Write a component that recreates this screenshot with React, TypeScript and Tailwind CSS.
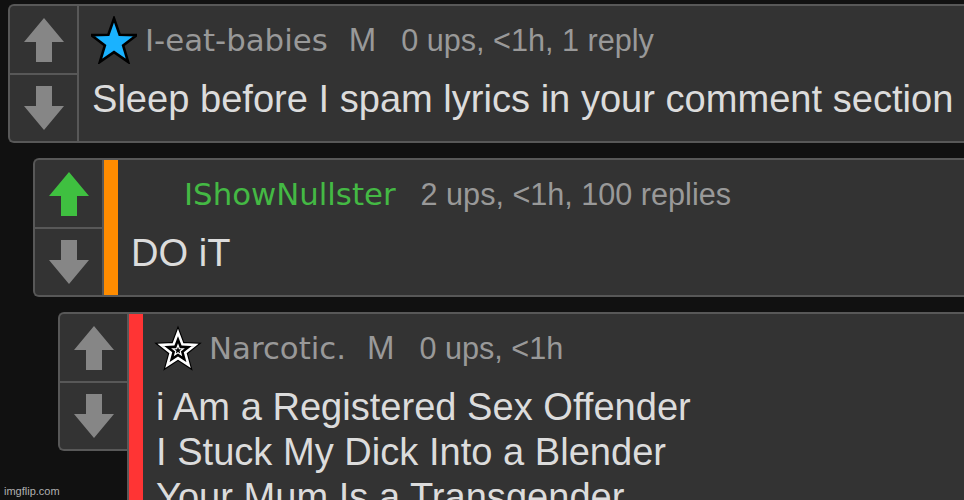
import React from 'react';

const GRAY = '#868686';

function starPoints(R: number, r: number, dy = 0) {
  const pts: string[] = [];
  for (let i = 0; i < 10; i++) {
    const rad = i % 2 === 0 ? R : r;
    const a = ((-90 + i * 36) * Math.PI) / 180;
    pts.push(`${(Math.cos(a) * rad).toFixed(2)},${(Math.sin(a) * rad + dy).toFixed(2)}`);
  }
  return pts.join(' ');
}

function Arrow({ dir, color }: { dir: 'up' | 'down'; color: string }) {
  return (
    <svg width="40" height="44" viewBox="0 0 40 44" className={dir === 'down' ? 'rotate-180' : ''}>
      <polygon points="20,0 40,24 28,24 28,44 12,44 12,24 0,24" fill={color} />
    </svg>
  );
}

function BlueStar() {
  return (
    <svg width="46" height="48" viewBox="-23 -24 46 48" className="shrink-0">
      <polygon points={starPoints(24, 9.6, 2.5)} fill="#1ab2ff" stroke="#000" strokeWidth="2.6" strokeLinejoin="miter" />
    </svg>
  );
}

function OutlineStar() {
  return (
    <svg width="48" height="48" viewBox="-24 -24 48 48" className="shrink-0">
      <polygon points={starPoints(25, 10.5, 2.5)} fill="#000" />
      <polygon points={starPoints(18, 7.6, 2.5)} fill="#000" stroke="#fff" strokeWidth="2.6" />
      <polygon points={starPoints(5.5, 2.3, 2.5)} fill="none" stroke="#fff" strokeWidth="1.2" />
    </svg>
  );
}

type CommentProps = {
  indent: string;
  bar?: string;
  upColor?: string;
  star?: 'blue' | 'outline' | 'none';
  name: string;
  nameColor?: string;
  mod?: boolean;
  stats: string;
  lines: string[];
};

function Comment({ indent, bar, upColor = GRAY, star = 'none', name, nameColor = 'text-[#999999]', mod, stats, lines }: CommentProps) {
  return (
    <div className={`flex items-start w-[1100px] ${indent}`}>
      <div className="w-[69px] h-[139px] shrink-0 flex flex-col border-2 border-r-0 border-[#585858] rounded-l-md bg-[#333333]">
        <div className="h-[67px] flex items-center justify-center">
          <Arrow dir="up" color={upColor} />
        </div>
        <div className="flex-1 flex items-center justify-center border-t-2 border-[#585858]">
          <Arrow dir="down" color={GRAY} />
        </div>
      </div>
      <div className="flex-1 min-h-[139px] flex border-2 border-[#585858] rounded-r-md bg-[#333333]">
        {bar && <div className={`w-[14px] shrink-0 ${bar}`} />}
        <div className="pl-[13px] pt-[14px] pb-[19px]">
          <div className="flex items-center h-[40px] whitespace-nowrap">
            <div className="w-[44px] h-[40px] flex items-center justify-center">
              {star === 'blue' && <BlueStar />}
              {star === 'outline' && <OutlineStar />}
            </div>
            <span className={`ml-[9px] font-['DejaVu_Sans',sans-serif] text-[30.8px] leading-[40px] ${nameColor}`}>{name}</span>
            {mod && <span className="ml-[21px] font-['Liberation_Sans',Arial,sans-serif] text-[33px] leading-[40px] text-[#999999]">M</span>}
            <span className="ml-[25px] font-['Liberation_Sans',Arial,sans-serif] text-[30.6px] leading-[40px] text-[#999999]">{stats}</span>
          </div>
          <div className="mt-[17px] font-['Liberation_Sans',Arial,sans-serif] text-[38.1px] leading-[45px] text-[#dcdcdc] whitespace-nowrap">
            {lines.map((l, i) => (
              <div key={i}>{l}</div>
            ))}
          </div>
        </div>
      </div>
    </div>
  );
}

export default function App() {
  return (
    <div className="relative w-[964px] h-[500px] overflow-hidden bg-[#111111] pt-[4px] flex flex-col gap-[15px]">
      <Comment
        indent="ml-[8px]"
        star="blue"
        name="I-eat-babies"
        mod
        stats="0 ups, <1h, 1 reply"
        lines={['Sleep before I spam lyrics in your comment section']}
      />
      <Comment
        indent="ml-[33px]"
        bar="bg-[#ff8c00]"
        upColor="#3fc040"
        name="IShowNullster"
        nameColor="text-[#44b944]"
        stats="2 ups, <1h, 100 replies"
        lines={['DO iT']}
      />
      <Comment
        indent="ml-[58px]"
        bar="bg-[#ff3434]"
        star="outline"
        name="Narcotic."
        mod
        stats="0 ups, <1h"
        lines={['i Am a Registered Sex Offender', 'I Stuck My Dick Into a Blender', 'Your Mum Is a Transgender']}
      />
      <span className="absolute left-[4px] bottom-[2px] font-['Liberation_Sans',Arial,sans-serif] text-[11px] leading-[14px] text-[#b0b0b0]">
        imgflip.com
      </span>
    </div>
  );
}
